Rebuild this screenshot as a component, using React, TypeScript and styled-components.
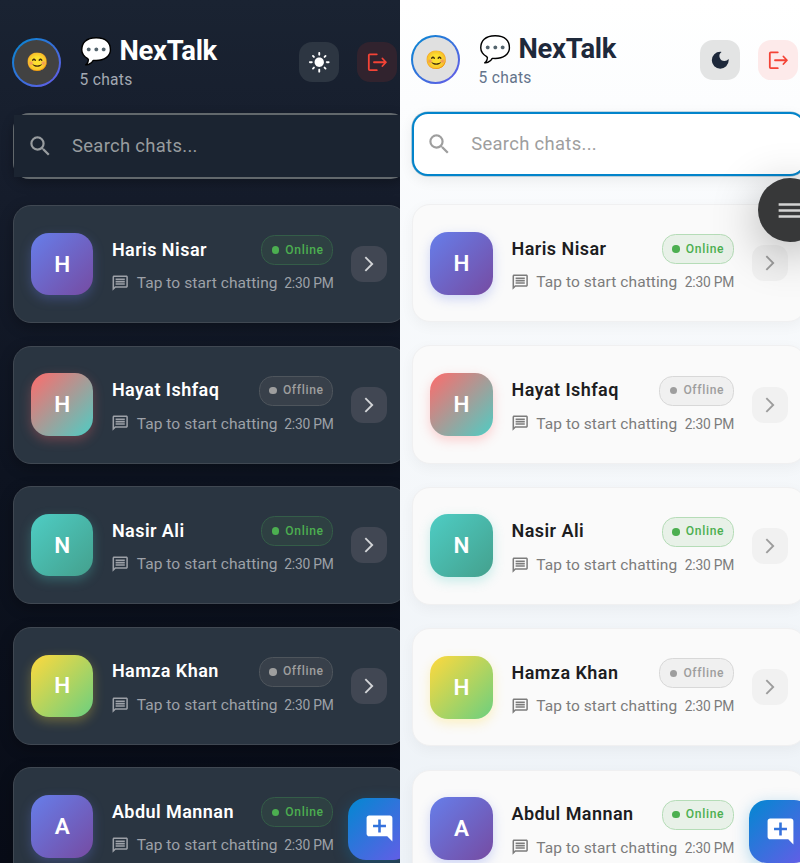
import React from "react";
import styled, { createGlobalStyle, css, ThemeProvider } from "styled-components";
import {
  MdSearch,
  MdOutlineMessage,
  MdArrowForwardIos,
  MdAddComment,
  MdLightMode,
  MdDarkMode,
  MdMenu,
} from "react-icons/md";

const darkTheme = {
  dark: true,
  bg: "linear-gradient(180deg, #1a2332 0%, #151c2b 23%, #0d1320 55%, #080c17 100%)",
  side: 12.6,
  headWidth: 384.6,
  headTop: 37.5,
  searchTop: 26.5,
  searchHeight: 66,
  listTop: 26,
  cardGap: 22.6,
  cardHeight: 118,
  avatar: 62.5,
  infoWidth: 221.6,
  infoEnd: 17.6,
  title: "#ffffff",
  subtitle: "#a3a9b3",
  faceBg: "#424242",
  toggleBg: "#2d3642",
  logoutBg: "#31232e",
  card: "#2a3541",
  cardBorder: "#404852",
  cardShadow: "0 4px 14px rgba(0, 0, 0, 0.28)",
  name: "#ffffff",
  muted: "#9da1a8",
  placeholder: "#989c9f",
  chevron: "#d2d4d7",
  chevronBg: "#414753",
  online: "#4caf50",
  onlineBg: "#2e4042",
  onlineBorder: "#345d48",
  offline: "#9e9e9e",
  offlineBg: "#38404a",
  offlineBorder: "#4e555c",
  fabX: 348,
  fabY: 797.5,
};

const lightTheme: typeof darkTheme = {
  dark: false,
  bg: "linear-gradient(180deg, #ffffff 0%, #fcfdfe 12%, #f8fafc 28%, #f4f7fa 60%, #edf2f7 100%)",
  side: 11.7,
  headWidth: 386.6,
  headTop: 35.4,
  searchTop: 27.8,
  searchHeight: 64,
  listTop: 27.8,
  cardGap: 23.1,
  cardHeight: 118.3,
  avatar: 63,
  infoWidth: 222.5,
  infoEnd: 18,
  title: "#1e293b",
  subtitle: "#64748b",
  faceBg: "#e0e0e0",
  toggleBg: "#e3e4e4",
  logoutBg: "#fdeaea",
  card: "#fafafa",
  cardBorder: "#f0f0f1",
  cardShadow: "0 4px 14px rgba(0, 0, 0, 0.045)",
  name: "#1d1d1f",
  muted: "#7c7c7c",
  placeholder: "#9e9e9e",
  chevron: "#9c9c9c",
  chevronBg: "#f1f1f1",
  online: "#4caf50",
  onlineBg: "#e8f1e8",
  onlineBorder: "#b5dcb7",
  offline: "#9e9e9e",
  offlineBg: "#f0f0f0",
  offlineBorder: "#d8d8d8",
  fabX: 349,
  fabY: 800.3,
};

type Theme = typeof darkTheme;
const t = (pick: (theme: Theme) => string | number) => (p: { theme: any }) => pick(p.theme as Theme);

const GlobalStyle = createGlobalStyle`
  * { box-sizing: border-box; }
  body {
    margin: 0;
    background: #fff;
    font-family: Roboto, "Liberation Sans", sans-serif;
  }
`;

const Page = styled.main`
  display: grid;
  grid-template-columns: 400px 400px;
  width: 800px;
  height: 863px;
  overflow: hidden;
`;

const Screen = styled.section`
  position: relative;
  overflow: hidden;
  height: 863px;
  padding: ${t((c) => c.headTop)}px 0 0 ${t((c) => c.side)}px;
  background: ${t((c) => c.bg)};
`;

const Content = styled.div`
  display: flex;
  flex-direction: column;
  width: 394px;
`;

const Header = styled.header`
  display: flex;
  align-items: center;
  height: 49px;
  width: ${t((c) => c.headWidth)}px;
`;

const Face = styled.div`
  display: grid;
  place-items: center;
  width: 49px;
  height: 49px;
  margin-left: -0.4px;
  border: 2px solid transparent;
  border-radius: 50%;
  font-size: 18px;
  line-height: 1;
  background:
    linear-gradient(${t((c) => c.faceBg)}, ${t((c) => c.faceBg)}) padding-box,
    linear-gradient(135deg, #0288d1, #6a5ae8) border-box;
`;

const Heading = styled.div`
  flex: 1;
  margin-left: 18.3px;
  padding-top: ${(p) => (p.theme.dark ? 2.6 : 3.8)}px;
`;

const Title = styled.h1`
  display: flex;
  align-items: center;
  gap: 8px;
  margin: 0;
  height: 33px;
  font-size: 27.4px;
  font-weight: 700;
  line-height: 33px;
  letter-spacing: -0.3px;
  white-space: nowrap;
  color: ${t((c) => c.title)};
`;

const Bubble = styled.span`
  width: 32px;
  font-size: 26px;
  letter-spacing: 0;
`;

const Subtitle = styled.p`
  margin: 0;
  height: 24px;
  font-size: 15.6px;
  line-height: 24px;
  letter-spacing: 0.3px;
  color: ${t((c) => c.subtitle)};
`;

const HeaderButton = styled.button<{ $danger?: boolean }>`
  display: grid;
  place-items: center;
  width: 40.5px;
  height: 40.5px;
  margin-left: ${(p) => (p.$danger ? 17.7 : 0)}px;
  padding: 0;
  border: 0;
  border-radius: 13px;
  font-size: 22.5px;
  color: ${(p) => (p.$danger ? "#f44336" : p.theme.title)};
  background: ${(p) => (p.$danger ? p.theme.logoutBg : p.theme.toggleBg)};
`;

const SearchBox = styled.label`
  display: flex;
  height: ${t((c) => c.searchHeight)}px;
  margin-top: ${t((c) => c.searchTop)}px;
  border-radius: 16px;
  ${(p) =>
    p.theme.dark
      ? css`
          border: 1.5px solid #62686c;
          border-width: 2px 1px;
          box-shadow: 0 4px 12px rgba(0, 0, 0, 0.28);
        `
      : css`
          border: 2px solid #0284cb;
          background: #fff;
          box-shadow: 0 0 0 0.6px rgba(60, 130, 170, 0.6), 0 4px 14px rgba(0, 0, 0, 0.07);
        `}
`;

const SearchField = styled.span`
  display: flex;
  flex: 1;
  align-items: center;
  padding-left: ${(p) => (p.theme.dark ? 13.4 : 12.5)}px;
  font-size: 26.5px;
  color: ${t((c) => c.placeholder)};
  background: ${(p) => (p.theme.dark ? "#1b2431" : "transparent")};
`;

const SearchInput = styled.input`
  width: 280px;
  margin-left: 18.5px;
  padding: 0;
  border: 0;
  outline: 0;
  background: transparent;
  font: 400 18.4px/24px Roboto, "Liberation Sans", sans-serif;
  letter-spacing: 0.33px;
  &::placeholder {
    color: ${t((c) => c.placeholder)};
    opacity: 1;
  }
`;

const List = styled.div`
  display: flex;
  flex-direction: column;
  gap: ${t((c) => c.cardGap)}px;
  margin-top: ${t((c) => c.listTop)}px;
`;

const Card = styled.article`
  display: flex;
  align-items: center;
  height: ${t((c) => c.cardHeight)}px;
  padding: 0 17.4px;
  border: 1px solid ${t((c) => c.cardBorder)};
  border-radius: 18px;
  background: ${t((c) => c.card)};
  box-shadow: ${t((c) => c.cardShadow)};
`;

const Avatar = styled.div<{ $from: string; $to: string }>`
  display: grid;
  flex: none;
  place-items: center;
  width: ${t((c) => c.avatar)}px;
  height: ${t((c) => c.avatar)}px;
  padding-bottom: 1px;
  border-radius: 18px;
  font-size: 22.5px;
  font-weight: 600;
  color: #fff;
  background: linear-gradient(135deg, ${(p) => p.$from}, ${(p) => p.$to});
  box-shadow: 0 4px 12px ${(p) => p.$from}4d;
`;

const Info = styled.div`
  flex: none;
  width: ${t((c) => c.infoWidth)}px;
  margin: 0 ${t((c) => c.infoEnd)}px 0 18.4px;
`;

const InfoRow = styled.div<{ $second?: boolean }>`
  display: flex;
  align-items: center;
  justify-content: space-between;
  height: ${(p) => (p.$second ? 20 : 30)}px;
  margin-top: ${(p) => (p.$second ? 8 : 0)}px;
  white-space: nowrap;
`;

const Name = styled.span`
  padding-bottom: 2px;
  font-size: 18px;
  font-weight: 600;
  letter-spacing: 0.45px;
  color: ${t((c) => c.name)};
`;

const Badge = styled.span<{ $online: boolean }>`
  display: flex;
  align-items: center;
  gap: 6px;
  height: 30px;
  padding: 0 8.8px 1px 9.5px;
  border: 1px solid ${(p) => (p.$online ? p.theme.onlineBorder : p.theme.offlineBorder)};
  border-radius: 13.5px;
  font-size: 12.1px;
  font-weight: 500;
  letter-spacing: 0.65px;
  color: ${(p) => (p.$online ? p.theme.online : p.theme.offline)};
  background: ${(p) => (p.$online ? p.theme.onlineBg : p.theme.offlineBg)};
  &::before {
    content: "";
    width: 7.5px;
    height: 7.5px;
    margin-top: 1px;
    border-radius: 50%;
    background: currentColor;
  }
`;

const Message = styled.span`
  display: flex;
  align-items: center;
  gap: 7.2px;
  font-size: 15.5px;
  letter-spacing: 0.08px;
  color: ${t((c) => c.muted)};
  svg {
    width: 18.4px;
    height: 18.4px;
    margin-left: -0.8px;
  }
`;

const Time = styled.time`
  font-size: 13.8px;
  letter-spacing: -0.24px;
  color: ${t((c) => c.muted)};
`;

const Chevron = styled.div`
  display: grid;
  flex: none;
  place-items: center;
  width: 36px;
  height: 36px;
  border-radius: 12px;
  font-size: 18px;
  color: ${t((c) => c.chevron)};
  background: ${t((c) => c.chevronBg)};
`;

const Fab = styled.button`
  position: absolute;
  left: ${t((c) => c.fabX)}px;
  top: ${t((c) => c.fabY)}px;
  display: grid;
  place-items: center;
  width: 62.7px;
  height: 62.7px;
  padding: 0;
  border: 0;
  border-radius: 18px;
  font-size: 31px;
  color: #fff;
  background: linear-gradient(135deg, #0288d1, #6a5ae8);
  box-shadow: 0 4px 16px rgba(2, 136, 209, 0.3);
`;

const MenuOrb = styled.button`
  position: absolute;
  left: 357.7px;
  top: 178.3px;
  display: grid;
  place-items: center;
  width: 64px;
  height: 64px;
  padding: 0;
  border: 0;
  border-radius: 50%;
  font-size: 29px;
  color: #d3d3d3;
  background: #373839;
  box-shadow: 0 10px 48px rgba(0, 0, 0, 0.3);
`;

const LogoutIcon = () => (
  <svg width="1em" height="1em" viewBox="0 0 24 24" fill="none" stroke="currentColor" strokeWidth="1.9" strokeLinecap="round" strokeLinejoin="round">
    <path d="M11.5 3.5H4a1 1 0 0 0-1 1v15a1 1 0 0 0 1 1h7.5" />
    <path d="M8.5 12h12.5M17.5 8l3.8 4-3.8 4" />
  </svg>
);

const chats = [
  { name: "Haris Nisar", online: true, from: "#667eea", to: "#764ba2" },
  { name: "Hayat Ishfaq", online: false, from: "#ff6b6b", to: "#4ecdc4" },
  { name: "Nasir Ali", online: true, from: "#4ecdc4", to: "#44a08d" },
  { name: "Hamza Khan", online: false, from: "#ffd93d", to: "#6bcf7f" },
  { name: "Abdul Mannan", online: true, from: "#667eea", to: "#764ba2" },
];

function ChatCard({ name, online, from, to }: (typeof chats)[number]) {
  return (
    <Card>
      <Avatar $from={from} $to={to}>{name[0]}</Avatar>
      <Info>
        <InfoRow>
          <Name>{name}</Name>
          <Badge $online={online}>{online ? "Online" : "Offline"}</Badge>
        </InfoRow>
        <InfoRow $second>
          <Message>
            <MdOutlineMessage />
            Tap to start chatting
          </Message>
          <Time>2:30 PM</Time>
        </InfoRow>
      </Info>
      <Chevron>
        <MdArrowForwardIos />
      </Chevron>
    </Card>
  );
}

function ChatScreen({ theme, withMenu }: { theme: Theme; withMenu?: boolean }) {
  return (
    <ThemeProvider theme={theme}>
      <Screen>
        <Content>
          <Header>
            <Face>😊</Face>
            <Heading>
              <Title>
                <Bubble>💬</Bubble>NexTalk
              </Title>
              <Subtitle>5 chats</Subtitle>
            </Heading>
            <HeaderButton aria-label="Toggle theme">{theme.dark ? <MdLightMode /> : <MdDarkMode />}</HeaderButton>
            <HeaderButton $danger aria-label="Log out">
              <LogoutIcon />
            </HeaderButton>
          </Header>
          <SearchBox>
            <SearchField>
              <MdSearch />
              <SearchInput placeholder="Search chats..." />
            </SearchField>
          </SearchBox>
          <List>
            {chats.map((chat) => (
              <ChatCard key={chat.name} {...chat} />
            ))}
          </List>
        </Content>
        <Fab aria-label="New chat">
          <MdAddComment />
        </Fab>
        {withMenu && (
          <MenuOrb aria-label="Menu">
            <MdMenu />
          </MenuOrb>
        )}
      </Screen>
    </ThemeProvider>
  );
}

export default function App() {
  return (
    <>
      <GlobalStyle />
      <Page>
        <ChatScreen theme={darkTheme} />
        <ChatScreen theme={lightTheme} withMenu />
      </Page>
    </>
  );
}
